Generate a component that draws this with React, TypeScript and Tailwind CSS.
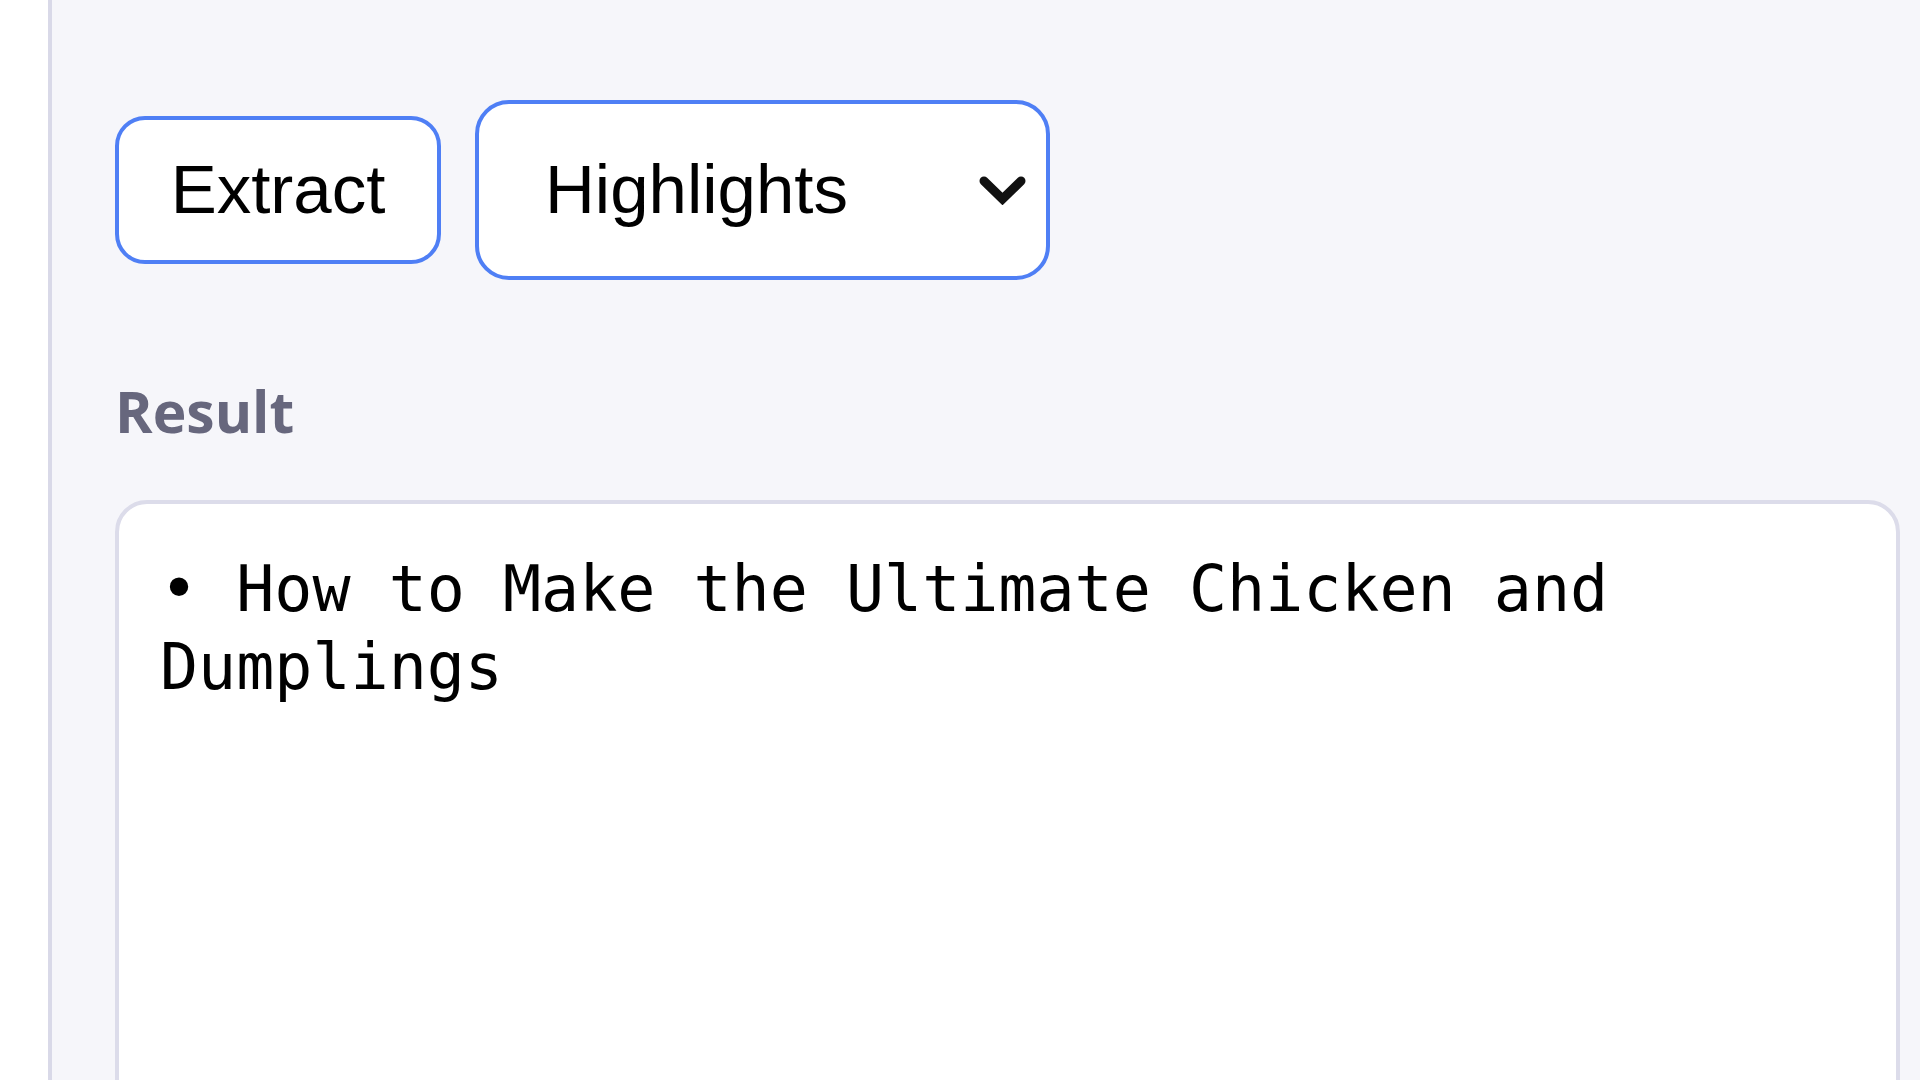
import React from "react";

export default function App() {
  return (
    <div className="flex h-[1080px] w-[1920px] overflow-hidden bg-[#f6f6fa]">
      <div className="w-[52px] shrink-0 bg-white border-r-[4px] border-[#d9d9e8]" />
      <main className="flex-1 pl-[63px] pr-[20px] pt-[100px]">
        <div className="flex items-center gap-[34px]">
          <button
            className="flex h-[148px] w-[326px] items-center justify-center rounded-[30px] border-[4px] border-[#4f7ff5] bg-white text-[69px] text-black"
            style={{ fontFamily: '"Liberation Sans", Arial, sans-serif' }}
          >
            Extract
          </button>
          <div
            className="flex h-[180px] w-[575px] items-center justify-between rounded-[34px] border-[4px] border-[#4f7ff5] bg-white pl-[66px] pr-[19px] text-[69px] text-black"
            style={{ fontFamily: '"Liberation Sans", Arial, sans-serif' }}
          >
            <span>Highlights</span>
            <svg width="49" height="30" viewBox="0 0 49 30" fill="none">
              <polyline
                points="6,6 24.5,24 43,6"
                stroke="#111"
                strokeWidth="9"
                strokeLinecap="round"
                strokeLinejoin="miter"
              />
            </svg>
          </div>
        </div>
        <div
          className="mt-[103px] text-[57px] font-bold leading-none text-[#67677d]"
          style={{ fontFamily: '"Open Sans", "Noto Sans", sans-serif' }}
        >
          Result
        </div>
        <div
          className="mt-[60px] h-[700px] rounded-[32px] border-[4px] border-[#dcdcea] bg-white pl-[41px] pr-[37px] pt-[46px] text-[63.3px] leading-[78px] text-black whitespace-pre-wrap"
          style={{ fontFamily: '"DejaVu Sans Mono", "Liberation Mono", monospace' }}
        >
          • How to Make the Ultimate Chicken and Dumplings
        </div>
      </main>
    </div>
  );
}
